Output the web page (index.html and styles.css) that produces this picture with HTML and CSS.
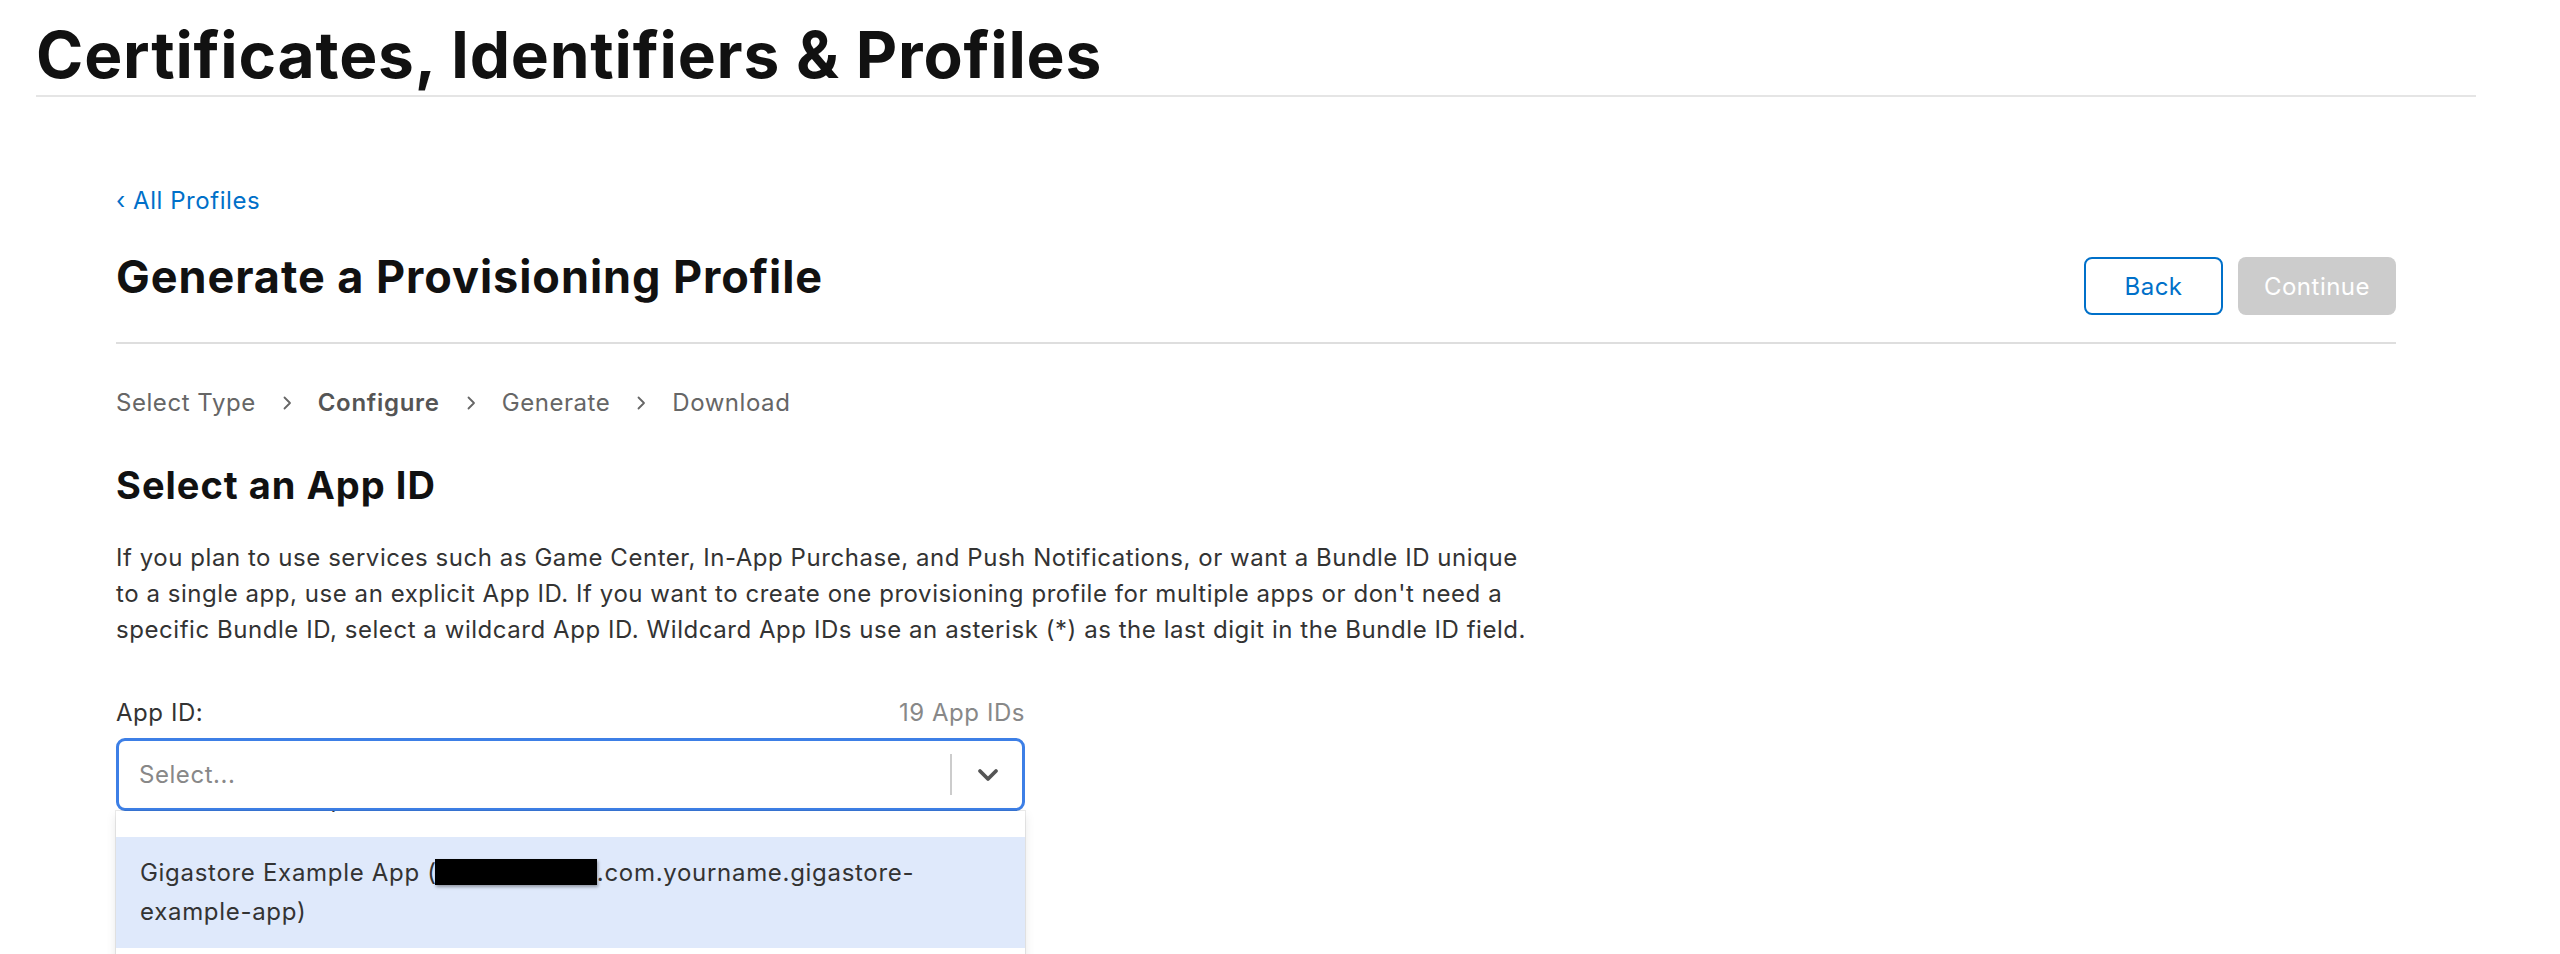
FILE: index.html
```html
<!DOCTYPE html>
<html lang="en">
<head>
<meta charset="utf-8">
<title>Certificates, Identifiers &amp; Profiles</title>
<link rel="stylesheet" href="styles.css">
</head>
<body>
<header class="page-header">
  <h1 class="page-title">Certificates, Identifiers &amp; Profiles</h1>
</header>
<main class="main">
  <a class="back-link" href="#"><span class="back-chev">‹</span> All Profiles</a>
  <div class="heading-row">
    <h2 class="heading">Generate a Provisioning Profile</h2>
    <div class="actions">
      <button class="btn btn-back" type="button">Back</button>
      <button class="btn btn-continue" type="button" disabled>Continue</button>
    </div>
  </div>
  <nav class="steps">
    <span class="step">Select Type</span>
    <svg class="step-chev" width="9" height="14" viewBox="0 0 9 14"><path d="M1.5 1.5 L7 7 L1.5 12.5" fill="none" stroke="#666" stroke-width="1.8" stroke-linecap="round" stroke-linejoin="round"/></svg>
    <span class="step step-current">Configure</span>
    <svg class="step-chev" width="9" height="14" viewBox="0 0 9 14"><path d="M1.5 1.5 L7 7 L1.5 12.5" fill="none" stroke="#666" stroke-width="1.8" stroke-linecap="round" stroke-linejoin="round"/></svg>
    <span class="step">Generate</span>
    <svg class="step-chev" width="9" height="14" viewBox="0 0 9 14"><path d="M1.5 1.5 L7 7 L1.5 12.5" fill="none" stroke="#666" stroke-width="1.8" stroke-linecap="round" stroke-linejoin="round"/></svg>
    <span class="step">Download</span>
  </nav>
  <h3 class="section-title">Select an App ID</h3>
  <p class="desc">If you plan to use services such as Game Center, In-App Purchase, and Push Notifications, or want a Bundle ID unique<br>to a single app, use an explicit App ID. If you want to create one provisioning profile for multiple apps or don't need a<br>specific Bundle ID, select a wildcard App ID. Wildcard App IDs use an asterisk (*) as the last digit in the Bundle ID field.</p>
  <div class="field">
    <div class="field-label-row">
      <label class="field-label">App ID:</label>
      <span class="field-count">19 App IDs</span>
    </div>
    <div class="select">
      <div class="select-control">
        <span class="select-placeholder">Select...</span>
        <span class="select-sep"></span>
        <svg class="select-chev" width="22" height="14" viewBox="0 0 22 14"><path d="M3 3 L11 11 L19 3" fill="none" stroke="#555" stroke-width="3.8" stroke-linecap="round" stroke-linejoin="round"/></svg>
      </div>
      <div class="select-menu">
        <div class="option option-prev">XXXXXXXXXX App<br>XXXXXXXXXX.*)</div>
        <div class="option option-focused">Gigastore Example App (<span class="redact"></span>.com.yourname.gigastore-<br>example-app)</div>
        <div class="option">Example App</div>
      </div>
    </div>
  </div>
</main>
</body>
</html>
```
FILE: styles.css
```css
* { box-sizing: border-box; }
html, body { margin: 0; padding: 0; background: #fff; }
body {
  font-family: Inter, "Noto Sans", "Liberation Sans", sans-serif;
  color: #333;
  letter-spacing: 0.55px;
  height: 954px;
  overflow: hidden;
}
.page-header {
  margin: 0 84px 0 36px;
  padding-top: 23px;
  padding-bottom: 8px;
  border-bottom: 2px solid #e5e5e5;
}
.page-title {
  margin: 0;
  font-size: 64px;
  line-height: 64px;
  font-weight: 700;
  letter-spacing: 0.8px;
  color: #111;
}
.main {
  margin: 0 164px 0 116px;
  display: flex;
  flex-direction: column;
  align-items: stretch;
}
.back-link {
  align-self: flex-start;
  margin-top: 86px;
  font-size: 24px;
  line-height: 36px;
  color: #0070c9;
  text-decoration: none;
}
.back-chev { font-size: 24px; }
.heading-row {
  margin-top: 32px;
  display: flex;
  justify-content: space-between;
  align-items: flex-start;
  padding-bottom: 27px;
  border-bottom: 2px solid #dedede;
}
.heading {
  margin: 0;
  font-size: 45px;
  line-height: 52px;
  font-weight: 700;
  letter-spacing: 0.95px;
  color: #111;
}
.actions {
  margin-top: 6px;
  display: flex;
  gap: 15px;
}
.btn {
  font-family: inherit;
  font-size: 24px;
  letter-spacing: 0.5px;
  height: 58px;
  border-radius: 8px;
  padding: 0;
}
.btn-back {
  width: 139px;
  background: #fff;
  border: 2px solid #0070c9;
  color: #0070c9;
}
.btn-continue {
  width: 158px;
  background: #cccccc;
  border: 0;
  color: #fff;
}
.steps {
  margin-top: 41px;
  display: flex;
  align-items: center;
  font-size: 24px;
  line-height: 36px;
  color: #666;
}
.step-chev { margin: 0 26px 0 27px; }
.step-current { font-weight: 600; color: #555; letter-spacing: 0.7px; }
.section-title {
  margin: 42px 0 0;
  font-size: 38px;
  line-height: 44px;
  font-weight: 700;
  letter-spacing: 1px;
  color: #111;
}
.desc {
  margin: 33px 0 0;
  font-size: 24px;
  line-height: 36px;
  color: #333;
}
.field { width: 909px; margin-top: 47px; }
.field-label-row {
  display: flex;
  justify-content: space-between;
  align-items: baseline;
  font-size: 24px;
  line-height: 36px;
}
.field-label { color: #333; }
.field-count { color: #888; }
.select { position: relative; margin-top: 7px; }
.select-control {
  height: 73px;
  border: 3px solid #3d7fe6;
  border-radius: 9px;
  display: flex;
  align-items: center;
  padding-left: 20px;
}
.select-placeholder {
  flex: 1;
  font-size: 24px;
  color: #888;
}
.select-sep {
  width: 2px;
  height: 41px;
  background: #ccc;
}
.select-chev { margin: 0 23px 0 25px; }
.select-menu {
  position: absolute;
  left: 0;
  right: 0;
  top: 100%;
  height: 200px;
  overflow: hidden;
  background: #fff;
  box-shadow: 0 0 0 1px rgba(0,0,0,0.08), 0 4px 11px rgba(0,0,0,0.1);
  border-radius: 0 0 6px 6px;
}
.option {
  padding: 16px 24px 17px;
  font-size: 24px;
  line-height: 39px;
  letter-spacing: 0.7px;
  color: #333;
}
.option-prev { margin-top: -85px; }
.option-focused { background: #dfe9fb; }
.redact {
  display: inline-block;
  width: 162px;
  height: 26px;
  background: #000;
  vertical-align: -4px;
  margin-left: -2px;
  box-shadow: 1px 2px 3px rgba(0,0,0,0.35);
}
```
